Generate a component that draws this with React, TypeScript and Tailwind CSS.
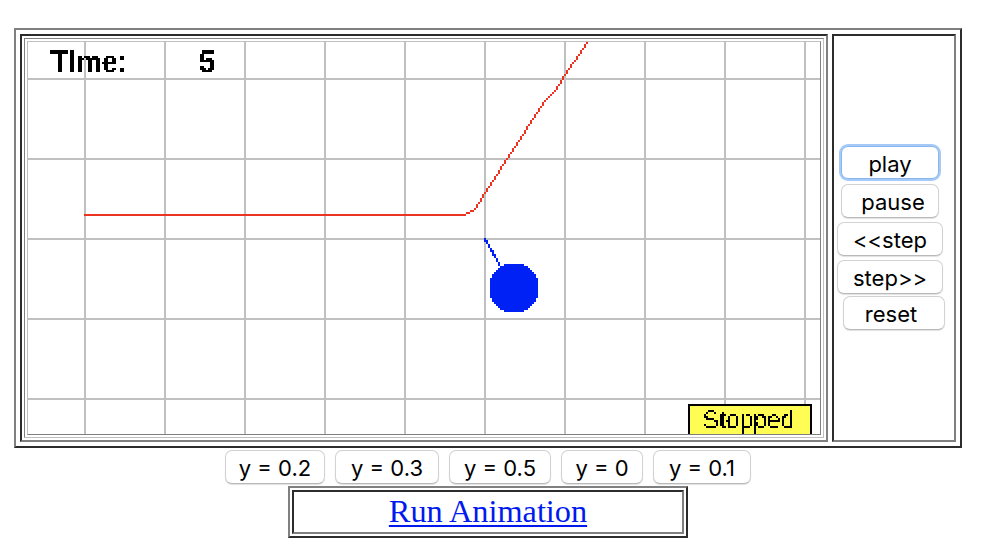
import { useState } from "react";
import clsx from "clsx";

type Point = [number, number];

const COLS = 396;
const ROWS = 196;
const CELL = 40;

const CONTROLS = [
    { label: "play", className: "ml-[7px] w-[98px] h-[33px] mb-[5px]", focused: true },
    { label: "pause", className: "ml-[7px] w-[98px] h-[34px] mb-1 pl-[6px]" },
    { label: "<<step", className: "ml-[3px] w-[106px] h-[34px] mb-1" },
    { label: "step>>", className: "ml-[3px] w-[106px] h-[34px] mb-[2px]" },
    { label: "reset", className: "ml-[9px] w-[102px] h-[34px] pr-[6px]" },
];

const PRESETS = [
    { label: "y = 0.2", className: "w-[100px]" },
    { label: "y = 0.3", className: "w-[104px]" },
    { label: "y = 0.5", className: "w-[102px]" },
    { label: "y = 0", className: "w-[82px]" },
    { label: "y = 0.1", className: "w-[98px]" },
];

const TRACE: Point[] = [
    [28, 86], [218, 86], [220, 85], [222, 84], [223, 83],
    [239, 58], [258, 29], [263, 24], [268, 16], [279, 0],
];

// Top row and height of each pixel column of the pendulum string
const STRING: Point[] = [[98, 2], [99, 2], [101, 2], [103, 2], [104, 3], [106, 2], [108, 2], [110, 2]];

// Bresenham line, returned as unit squares of an svg path
function rasterLine([x0, y0]: Point, [x1, y1]: Point) {
    const dx = Math.abs(x1 - x0);
    const dy = -Math.abs(y1 - y0);
    const sx = x0 < x1 ? 1 : -1;
    const sy = y0 < y1 ? 1 : -1;
    let err = dx + dy;
    let x = x0;
    let y = y0;
    let d = "";
    for (;;) {
        d += `M${x} ${y}h1v1h-1z`;
        if (x === x1 && y === y1) break;
        const e2 = 2 * err;
        if (e2 >= dy) { err += dy; x += sx; }
        if (e2 <= dx) { err += dx; y += sy; }
    }
    return d;
}

function rasterPath(points: Point[]) {
    return points.slice(1).map((p, i) => rasterLine(points[i], p)).join("");
}

function rasterDisc(cx: number, cy: number, size: number) {
    let d = "";
    for (let row = -size; row < size; row++) {
        const half = Math.floor(Math.sqrt((size + 0.5) ** 2 - (row + 0.5) ** 2) + 0.5);
        const w = Math.min(half, size);
        d += `M${cx - w} ${cy + row}h${2 * w}v1h${-2 * w}z`;
    }
    return d;
}

function Plot({ time, status }: { time: number; status: string }) {
    const vertical = Array.from({ length: 10 }, (_, i) => 28 + i * CELL);
    const horizontal = Array.from({ length: 5 }, (_, i) => 18 + i * CELL);

    return (
        <svg width={COLS * 2} height={ROWS * 2} viewBox={`0 0 ${COLS} ${ROWS}`} className="block">
            <defs>
                {/* Snaps text to the same coarse pixels as the lines */}
                <filter id="coarse" filterUnits="userSpaceOnUse" primitiveUnits="userSpaceOnUse" x={0} y={0} width={COLS} height={ROWS}>
                    <feFlood x={0} y={0} width={0.5} height={0.5} floodColor="#000" result="dot" />
                    <feComposite in="dot" in2="dot" operator="over" x={0} y={0} width={1} height={1} />
                    <feTile result="dots" />
                    <feComposite in="SourceGraphic" in2="dots" operator="in" />
                    <feComponentTransfer result="a">
                        <feFuncA type="discrete" tableValues="0 1" />
                    </feComponentTransfer>
                    <feOffset in="a" dx={0.5} dy={0} result="b" />
                    <feMerge result="ab">
                        <feMergeNode in="a" />
                        <feMergeNode in="b" />
                    </feMerge>
                    <feOffset in="ab" dx={0} dy={0.5} result="cd" />
                    <feMerge>
                        <feMergeNode in="ab" />
                        <feMergeNode in="cd" />
                    </feMerge>
                </filter>
            </defs>
            <g fill="#c0c0c0" shapeRendering="crispEdges">
                {vertical.map(x => <rect key={x} x={x} y={0} width={1} height={ROWS} />)}
                {horizontal.map(y => <rect key={y} x={0} y={y} width={COLS} height={1} />)}
            </g>
            <g shapeRendering="crispEdges">
                <path d={rasterPath(TRACE)} fill="#eb3324" />
                {STRING.map(([y, h], i) => <rect key={y} x={228 + i} y={y} width={1} height={h} fill="#0021f5" />)}
                <path d={rasterDisc(243, 123, 12)} fill="#0021f5" />
                <rect x={330} y={181} width={62} height={15} fill="#000" />
                <rect x={331} y={182} width={60} height={14} fill="#fffd54" />
            </g>
            <g fontFamily="'Liberation Sans', Arial, sans-serif" fill="#000" filter="url(#coarse)">
                <text x={11} y={15} fontSize={15.8} fontWeight={700} textLength={38.5} lengthAdjust="spacingAndGlyphs">TIme:</text>
                <text x={85.2} y={15} fontSize={15.8} fontWeight={700} textLength={8.2} lengthAdjust="spacingAndGlyphs">{time}</text>
                <text x={337} y={193} fontSize={12.6} textLength={46} lengthAdjust="spacing">{status}</text>
            </g>
        </svg>
    );
}

function PushButton({ label, className, focused, onClick }: {
    label: string;
    className: string;
    focused?: boolean;
    onClick?: () => void;
}) {
    return (
        <button
            type="button"
            onClick={onClick}
            className={clsx(
                "flex shrink-0 items-center justify-center whitespace-pre rounded-[7px] bg-white pt-[2px] font-[Inter,sans-serif] text-[22px] leading-none text-black outline-none",
                focused
                    ? "ring-2 ring-[#a6caf7] border border-[#8ab6ee]"
                    : "border border-[#d2d2d2] border-b-[#b9b9b9] shadow-[0_1px_1px_rgba(0,0,0,0.12)]",
                className
            )}
        >
            {label}
        </button>
    );
}

export default function App() {
    const [time, setTime] = useState(5);
    const [status, setStatus] = useState("Stopped");

    const handlers = [
        () => setStatus("Running"),
        () => setStatus("Stopped"),
        () => setTime(t => Math.max(0, t - 1)),
        () => setTime(t => t + 1),
        () => { setTime(0); setStatus("Stopped"); },
    ];

    return (
        <div className="h-[554px] w-[982px] overflow-hidden bg-white pl-[14px] pt-7">
            {/* Animation table */}
            <div className="flex h-[420px] w-[948px] gap-1 border-2 border-b-[#2c2c2c] border-l-[#808080] border-r-[#2c2c2c] border-t-[#808080] p-1">
                <div className="w-[808px] border-2 border-b-[#808080] border-l-[#2c2c2c] border-r-[#808080] border-t-[#2c2c2c] p-[2px]">
                    <div className="border border-b-[#c0c0c0] border-l-[#808080] border-r-[#c0c0c0] border-t-[#808080] p-[2px]">
                        <div className="border border-b-[#808080] border-l-[#c0c0c0] border-r-[#808080] border-t-[#c0c0c0]">
                            <Plot time={time} status={status} />
                        </div>
                    </div>
                </div>
                <div className="w-[124px] border-2 border-b-[#808080] border-l-[#2c2c2c] border-r-[#808080] border-t-[#2c2c2c] pt-[110px]">
                    {CONTROLS.map((control, i) => (
                        <PushButton key={control.label} {...control} onClick={handlers[i]} />
                    ))}
                </div>
            </div>

            {/* Presets */}
            <div className="ml-[211px] mt-[2px] flex h-[34px] gap-[10px]">
                {PRESETS.map(preset => (
                    <PushButton key={preset.label} label={preset.label} className={preset.className} />
                ))}
            </div>

            {/* Run link */}
            <div className="ml-[274px] mt-[2px] h-[52px] w-[400px] border-2 border-b-[#2c2c2c] border-l-[#808080] border-r-[#2c2c2c] border-t-[#808080] p-[2px]">
                <div className="h-11 border-2 border-b-[#808080] border-l-[#2c2c2c] border-r-[#808080] border-t-[#2c2c2c] text-center">
                    <a href="#" className="block font-['Liberation_Serif',serif] text-[32.3px] leading-[39px] text-[#0019ef] underline decoration-2 underline-offset-[3px]">
                        Run Animation
                    </a>
                </div>
            </div>
        </div>
    );
}
